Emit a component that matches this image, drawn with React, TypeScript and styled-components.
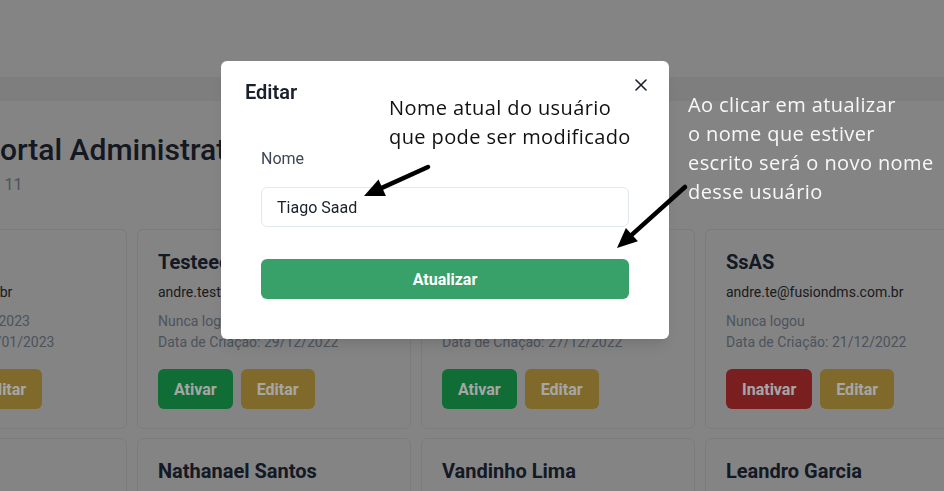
import React from "react";
import styled, { createGlobalStyle } from "styled-components";

const GlobalStyle = createGlobalStyle`
  html, body {
    margin: 0;
    padding: 0;
    width: 944px;
    height: 491px;
    overflow: hidden;
    background: #cbcbcb;
    font-family: Roboto, "Liberation Sans", sans-serif;
  }
  * { box-sizing: border-box; }
`;

const Page = styled.div`
  width: 944px;
  height: 491px;
  overflow: hidden;
  display: flex;
  flex-direction: column;
  background: #cbcbcb;
`;

const TopBar = styled.header`
  height: 77px;
  flex: none;
  background: #cbcbcb;
`;

const Band = styled.div`
  height: 24px;
  flex: none;
  background: #c2c2c2;
`;

const Main = styled.main`
  margin-left: -147px;
  width: 1126px;
  padding-top: 31px;
  display: flex;
  flex-direction: column;
`;

const Header = styled.div`
  padding-left: 128px;
  display: flex;
  flex-direction: column;
  gap: 5px;
`;

const Title = styled.h1`
  margin: 0;
  font-size: 30px;
  line-height: 36px;
  font-weight: 500;
  color: #1f2633;
  white-space: nowrap;
`;

const Subtitle = styled.p`
  margin: 0 0 0 -20px;
  font-size: 16px;
  line-height: 24px;
  color: #76808f;
  white-space: nowrap;
`;

const CardGrid = styled.section`
  margin-top: 32px;
  display: grid;
  grid-template-columns: repeat(4, 274px);
  gap: 9px 10px;
`;

const Card = styled.article`
  height: 200px;
  border: 1px solid #bebebe;
  border-radius: 6px;
  padding: 20px 20px;
  display: flex;
  flex-direction: column;
  background: #cbcbcb;
`;

const Name = styled.h2`
  margin: 0;
  font-size: 20px;
  line-height: 24px;
  font-weight: 700;
  color: #202838;
  white-space: nowrap;
`;

const Email = styled.p`
  margin: 8px 0 0;
  font-size: 14px;
  line-height: 21px;
  color: #2b2b2b;
  white-space: nowrap;
`;

const Info = styled.div`
  margin-top: 8px;
  display: flex;
  flex-direction: column;
`;

const Meta = styled.span`
  font-size: 14px;
  line-height: 21px;
  color: #76808f;
  white-space: nowrap;
`;

const Actions = styled.div`
  margin-top: 16px;
  display: flex;
  gap: 8px;
`;

const ActionButton = styled.button<{ $tone: "green" | "red" | "yellow" }>`
  height: 40px;
  padding: 0 16px;
  border: none;
  border-radius: 6px;
  font-family: Roboto, "Liberation Sans", sans-serif;
  font-size: 16px;
  font-weight: 700;
  color: #ffffff;
  background: ${(p) =>
    p.$tone === "green" ? "#1aa854" : p.$tone === "red" ? "#bc3131" : "#c4a342"};
`;

const Overlay = styled.div`
  position: fixed;
  inset: 0;
  background: rgba(0, 0, 0, 0.35);
  display: flex;
  align-items: flex-start;
  padding: 61px 0 0 221px;
`;

const Modal = styled.section`
  position: relative;
  width: 448px;
  background: #ffffff;
  border-radius: 6px;
  box-shadow: 0 10px 15px -3px rgba(0, 0, 0, 0.1), 0 4px 6px -2px rgba(0, 0, 0, 0.05);
  display: flex;
  flex-direction: column;
`;

const ModalHeader = styled.h2`
  margin: 0;
  padding: 16px 24px;
  font-size: 20px;
  line-height: 30px;
  font-weight: 600;
  color: #1a202c;
`;

const CloseButton = styled.button`
  position: absolute;
  top: 8px;
  right: 12px;
  width: 32px;
  height: 32px;
  border: none;
  background: transparent;
  display: flex;
  align-items: center;
  justify-content: center;
  padding: 0;
  color: #1a202c;
`;

const ModalBody = styled.div`
  padding: 8px 24px 24px;
`;

const Form = styled.form`
  padding: 16px;
  display: flex;
  flex-direction: column;
`;

const Label = styled.label`
  font-size: 16px;
  line-height: 24px;
  color: #3f4654;
  margin-bottom: 16px;
`;

const Input = styled.input`
  height: 40px;
  border: 1px solid #e2e8f0;
  border-radius: 6px;
  padding: 0 15px;
  font-family: Roboto, "Liberation Sans", sans-serif;
  font-size: 16px;
  color: #1a202c;
  outline: none;
`;

const SubmitButton = styled.button`
  margin-top: 32px;
  height: 40px;
  border: none;
  border-radius: 6px;
  background: #38a169;
  color: #ffffff;
  font-family: Roboto, "Liberation Sans", sans-serif;
  font-size: 16px;
  font-weight: 700;
`;

const Note = styled.p<{ $light?: boolean }>`
  position: fixed;
  margin: 0;
  font-family: "Open Sans", Lato, sans-serif;
  font-size: 20px;
  line-height: 29px;
  letter-spacing: 0.4px;
  color: ${(p) => (p.$light ? "#f7f7f7" : "#111111")};
  white-space: pre;
  pointer-events: none;
`;

const ArrowLayer = styled.svg`
  position: fixed;
  left: 0;
  top: 0;
  width: 944px;
  height: 491px;
  pointer-events: none;
`;

type User = {
  name: string;
  email: string;
  lines: string[];
  active: boolean;
};

const users: User[] = [
  {
    name: "Tiago Saad",
    email: "ts@fusiondms.com.br",
    lines: ["Último login: 10/01/2023", "Data de Criação: 03/01/2023"],
    active: true,
  },
  {
    name: "Testeeeee",
    email: "andre.teste@fusiondms.com.br",
    lines: ["Nunca logou", "Data de Criação: 29/12/2022"],
    active: false,
  },
  {
    name: "Teste Dois",
    email: "andre.t2@fusiondms.com.br",
    lines: ["Nunca logou", "Data de Criação: 27/12/2022"],
    active: false,
  },
  {
    name: "SsAS",
    email: "andre.te@fusiondms.com.br",
    lines: ["Nunca logou", "Data de Criação: 21/12/2022"],
    active: true,
  },
  {
    name: "André Souza",
    email: "andre@fusiondms.com.br",
    lines: ["Nunca logou", "Data de Criação: 20/12/2022"],
    active: true,
  },
  {
    name: "Nathanael Santos",
    email: "nathanael@fusiondms.com.br",
    lines: ["Nunca logou", "Data de Criação: 19/12/2022"],
    active: true,
  },
  {
    name: "Vandinho Lima",
    email: "vandinho@fusiondms.com.br",
    lines: ["Nunca logou", "Data de Criação: 19/12/2022"],
    active: true,
  },
  {
    name: "Leandro Garcia",
    email: "leandro@fusiondms.com.br",
    lines: ["Nunca logou", "Data de Criação: 18/12/2022"],
    active: true,
  },
];

function arrowHead(x1: number, y1: number, x2: number, y2: number, len = 20, half = 9) {
  const dx = x2 - x1;
  const dy = y2 - y1;
  const d = Math.hypot(dx, dy);
  const ux = dx / d;
  const uy = dy / d;
  const bx = x2 - ux * len;
  const by = y2 - uy * len;
  const px = -uy;
  const py = ux;
  return {
    line: { x2: bx + ux * 4, y2: by + uy * 4 },
    points: `${x2},${y2} ${bx + px * half},${by + py * half} ${bx - px * half},${by - py * half}`,
  };
}

const Arrow: React.FC<{ x1: number; y1: number; x2: number; y2: number }> = ({ x1, y1, x2, y2 }) => {
  const h = arrowHead(x1, y1, x2, y2);
  return (
    <g>
      <line x1={x1} y1={y1} x2={h.line.x2} y2={h.line.y2} stroke="#000" strokeWidth={4.5} strokeLinecap="round" />
      <polygon points={h.points} fill="#000" />
    </g>
  );
};

export default function App() {
  return (
    <>
      <GlobalStyle />
      <Page>
        <TopBar />
        <Band />
        <Main>
          <Header>
            <Title>Portal Administrativo</Title>
            <Subtitle>Total: 11</Subtitle>
          </Header>
          <CardGrid>
            {users.map((u) => (
              <Card key={u.name}>
                <Name>{u.name}</Name>
                <Email>{u.email}</Email>
                <Info>
                  {u.lines.map((l) => (
                    <Meta key={l}>{l}</Meta>
                  ))}
                </Info>
                <Actions>
                  <ActionButton $tone={u.active ? "red" : "green"}>
                    {u.active ? "Inativar" : "Ativar"}
                  </ActionButton>
                  <ActionButton $tone="yellow">Editar</ActionButton>
                </Actions>
              </Card>
            ))}
          </CardGrid>
        </Main>
      </Page>
      <Overlay>
        <Modal>
          <ModalHeader>Editar</ModalHeader>
          <CloseButton aria-label="Fechar">
            <svg width="12" height="12" viewBox="0 0 12 12">
              <path d="M1 1 L11 11 M11 1 L1 11" stroke="currentColor" strokeWidth="1.6" strokeLinecap="round" />
            </svg>
          </CloseButton>
          <ModalBody>
            <Form onSubmit={(e) => e.preventDefault()}>
              <Label htmlFor="nome">Nome</Label>
              <Input id="nome" defaultValue="Tiago Saad" />
              <SubmitButton type="submit">Atualizar</SubmitButton>
            </Form>
          </ModalBody>
        </Modal>
      </Overlay>
      <Note style={{ left: 389, top: 93 }}>{"Nome atual do usuário\nque pode ser modificado"}</Note>
      <Note $light style={{ left: 688, top: 90 }}>
        {"Ao clicar em atualizar\no nome que estiver\nescrito será o novo nome\ndesse usuário"}
      </Note>
      <ArrowLayer viewBox="0 0 944 491">
        <Arrow x1={428} y1={167} x2={364} y2={196} />
        <Arrow x1={685} y1={187} x2={617} y2={248} />
      </ArrowLayer>
    </>
  );
}
